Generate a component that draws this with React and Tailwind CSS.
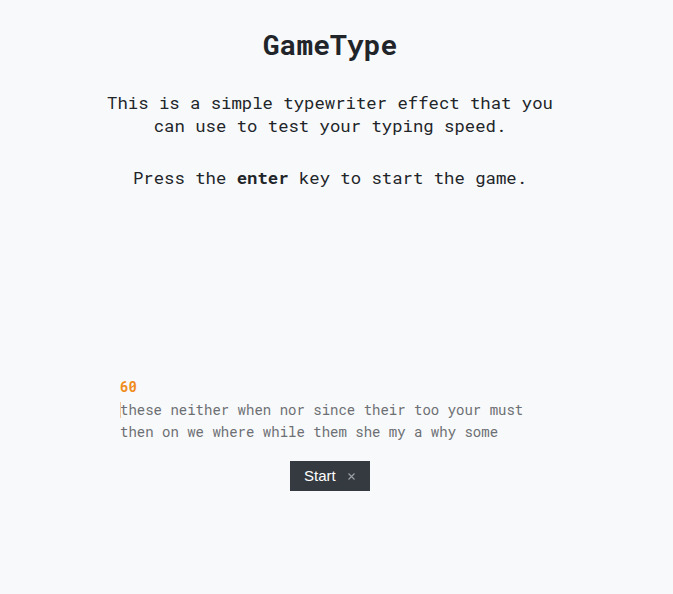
export default function App() {
  const mono = { fontFamily: "'Roboto Mono', 'DejaVu Sans Mono', monospace" };

  return (
    <div className="min-h-[594px] w-full bg-[#f8f9fa]" style={mono}>
      <div className="w-[660px] pt-[27px]">
        <h1 className="text-center text-[28px] font-bold leading-[36px] text-[#212529]">GameType</h1>

        <p className="mt-[28px] text-center text-[17.3px] leading-[23px] text-[#212529]">
          This is a simple typewriter effect that you
          <br />
          can use to test your typing speed.
        </p>

        <p className="mt-[29px] text-center text-[17.3px] leading-[23px] text-[#212529]">
          Press the <b className="font-bold">enter</b> key to start the game.
        </p>

        <div className="mx-auto mt-[188px] w-[420px]">
          <div className="text-[14px] font-bold leading-[20px] text-[#f08c1c]">60</div>
          <div className="relative mt-[2px] text-[14px] leading-[22px] text-[#6c6f73]">
            <span className="absolute left-0 top-[3px] h-[16px] w-px bg-[#f0c79a]" />
            these neither when nor since their too your must then on we where while them she my a why some
          </div>

          <div className="mt-[18px] flex justify-center">
            <button
              type="button"
              className="flex h-[30px] w-[80px] items-center bg-[#343a40] pl-[14px] text-[15px] text-white"
              style={{ fontFamily: "'Liberation Sans', Arial, sans-serif" }}
            >
              Start
              <svg className="ml-[12px] h-[7px] w-[7px]" viewBox="0 0 7 7" fill="none" stroke="#9ea2a7" strokeWidth="1.1">
                <path d="M0.5 0.5L6.5 6.5M6.5 0.5L0.5 6.5" />
              </svg>
            </button>
          </div>
        </div>
      </div>
    </div>
  );
}
